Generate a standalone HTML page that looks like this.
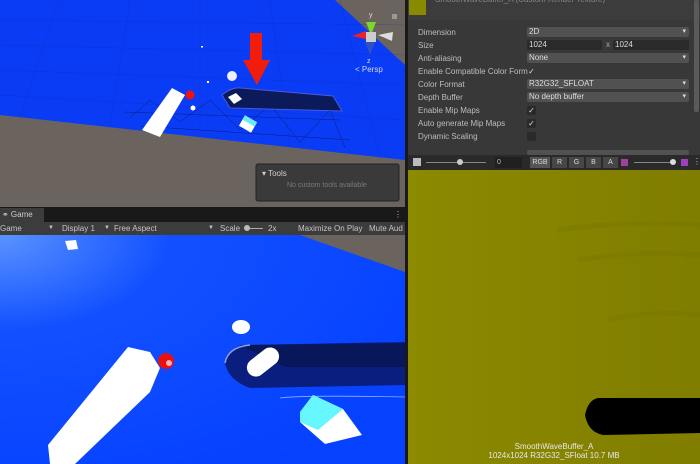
<!DOCTYPE html>
<html><head><style>
*{margin:0;padding:0;box-sizing:border-box}
body{width:700px;height:464px;overflow:hidden;background:#191919;font-family:"Liberation Sans",sans-serif;font-size:8px;color:#c8c8c8;position:relative}
.abs{position:absolute}
.row{position:absolute;left:418px;height:11px;line-height:11px;font-size:8px;color:#bdbdbd}
.fld{position:absolute;left:527px;width:162px;height:10px;background:#515151;border-radius:2px;font-size:8px;line-height:10px;padding-left:2px;color:#ddd}
.fld.dd::after{content:"▾";position:absolute;right:3px;top:0;font-size:7px}
.chk{position:absolute;left:527px;width:9px;height:9px;background:#2a2a2a;border-radius:1px;color:#ddd;font-size:8px;line-height:9px;text-align:center}
.tb{position:absolute;top:157px;height:11px;background:#474747;color:#ddd;font-size:7px;line-height:11px;text-align:center}
</style></head><body>
<!-- Scene view -->
<svg class="abs" style="left:0;top:0" width="405" height="208">
<rect width="405" height="208" fill="#6b645e"/>
<polygon points="0,0 335,0 405,65 405,160 0,115" fill="#0b3cf5"/>
<g stroke="#0a2aa8" stroke-width="0.5" opacity="0.4">
<line x1="0" y1="20" x2="405" y2="25"/><line x1="0" y1="45" x2="405" y2="55"/><line x1="0" y1="70" x2="405" y2="85"/><line x1="0" y1="95" x2="405" y2="120"/>
<line x1="60" y1="0" x2="20" y2="118"/><line x1="130" y1="0" x2="110" y2="125"/><line x1="200" y1="0" x2="200" y2="135"/><line x1="270" y1="0" x2="290" y2="145"/><line x1="340" y1="0" x2="380" y2="158"/>
</g>
<g stroke="#05165e" stroke-width="0.5" fill="none" opacity="0.8"><path d="M130 118 L150 100 L180 122 L210 100 L240 130 L270 105 L300 142 L330 110 L345 148 M125 112 L340 120 M140 126 L350 140"/></g>
<path d="M222 95 Q232 87 240 88 L333 96 L342 111 L230 108 Z" fill="#0a1a5a" stroke="#4a5ad8" stroke-width="1"/>
<path d="M228 97 L236 93 L242 99 L234 104 Z" fill="#fff"/>
<rect x="241" y="118" width="14" height="12" fill="#fff" transform="rotate(30 248 124)"/>
<rect x="241" y="118" width="14" height="5" fill="#6de8ff" transform="rotate(30 248 124)"/>
<polygon points="172,88 185,95 160,137 142,130" fill="#fff"/>
<circle cx="190" cy="95" r="4.5" fill="#e11"/>
<circle cx="232" cy="76" r="5" fill="#eef"/>
<circle cx="193" cy="108" r="2.5" fill="#fff"/>
<rect x="201" y="46" width="2" height="1.5" fill="#fff"/><rect x="207" y="81" width="2" height="2" fill="#fff"/>
<polygon points="250,33 262,33 262,60 270,60 257,85 243,60 250,60" fill="#f21c0c"/>
<polygon points="366,22 376,22 371,35" fill="#7bd92b"/>
<polygon points="352,36 366,31 366,39" fill="#e22"/>
<polygon points="378,35 393,32 392,41" fill="#ddd"/>
<polygon points="365,42 375,42 370,55" fill="#3050c0"/>
<rect x="366" y="32" width="10" height="10" fill="#ccc"/>
<text x="369" y="17" font-size="7" fill="#ddd">y</text><text x="367" y="63" font-size="7" fill="#ddd">z</text>
<text x="355" y="72" font-size="8" fill="#cfd8ff">&lt; Persp</text>
<rect x="392" y="14" width="5" height="5" fill="#999"/>
<rect x="256" y="164" width="143" height="37" rx="2" fill="#3a3a3a" stroke="#222"/>
<text x="262" y="176" font-size="8" fill="#cfcfcf">▾ Tools</text>
<text x="287" y="187" font-size="7" fill="#7a7a7a">No custom tools available</text>
</svg>
<!-- Game tabs -->
<div class="abs" style="left:0;top:207px;width:405px;height:15px;background:#191919"></div>
<div class="abs" style="left:0;top:208px;width:44px;height:14px;background:#3c3c3c;font-size:8px;line-height:14px;padding-left:2px;color:#ccc">⚭ Game</div>
<div class="abs" style="left:394px;top:210px;color:#ccc;font-size:8px">⋮</div>
<div class="abs" style="left:0;top:222px;width:405px;height:13px;background:#3c3c3c;font-size:8px;line-height:13px;color:#c4c4c4;white-space:nowrap">
<span class="abs" style="left:0">Game</span><span class="abs" style="left:48px;font-size:6px">▼</span>
<span class="abs" style="left:62px">Display 1</span><span class="abs" style="left:104px;font-size:6px">▼</span>
<span class="abs" style="left:114px">Free Aspect</span><span class="abs" style="left:208px;font-size:6px">▼</span>
<span class="abs" style="left:220px">Scale</span><span class="abs" style="left:244px;top:6px;width:19px;height:1px;background:#aaa"></span><span class="abs" style="left:244px;top:3px;width:6px;height:6px;border-radius:3px;background:#bbb"></span>
<span class="abs" style="left:268px">2x</span>
<span class="abs" style="left:298px">Maximize On Play</span><span class="abs" style="left:369px">Mute Aud</span>
</div>
<!-- Game view -->
<svg class="abs" style="left:0;top:235px" width="405" height="229">
<defs><radialGradient id="g" cx="0" cy="0" r="1.2"><stop offset="0" stop-color="#5a93ff"/><stop offset="0.35" stop-color="#1250ff"/><stop offset="1" stop-color="#0541ff"/></radialGradient></defs>
<rect width="405" height="229" fill="url(#g)"/>
<polygon points="300,0 405,0 405,37" fill="#6b645e"/>
<path d="M245 110 Q228 112 225 128 Q228 145 250 153 L405 150 L405 107 Z" fill="#0a1e80"/>
<path d="M240 110 L405 108 L405 132 L285 132 Z" fill="#08165a"/>
<path d="M225 128 Q228 112 250 110" stroke="#8aa0e0" fill="none" stroke-width="1.5"/>
<path d="M280 163 Q300 160 405 162" stroke="#8ab0ff" fill="none" stroke-width="0.8"/>
<rect x="245" y="118" width="36" height="18" rx="9" fill="#fff" transform="rotate(-38 263 127)"/>
<polygon points="128,112 150,117 160,133 150,157 75,229 50,229 48,210" fill="#fff"/>
<circle cx="166" cy="126" r="8" fill="#e81010"/><circle cx="169" cy="128" r="3" fill="#ffb0b0"/>
<ellipse cx="241" cy="92" rx="9" ry="7" fill="#fff"/>
<polygon points="65,6 76,5 78,14 68,15" fill="#fff"/>
<polygon points="300,177 313,160 343,174 362,200 325,209 300,187" fill="#fff"/>
<polygon points="300,177 313,160 343,174 318,195 300,187" fill="#66f6ff"/>
</svg>
<div class="abs" style="left:405px;top:0;width:3px;height:464px;background:#191919"></div>
<!-- Inspector -->
<div class="abs" style="left:408px;top:0;width:292px;height:155px;background:#383838"></div>
<div class="abs" style="left:408px;top:0;width:292px;height:20px;background:#3c3c3c"></div>
<div class="abs" style="left:409px;top:0;width:17px;height:15px;background:#8a8a00"></div>
<div class="abs" style="left:435px;top:-5px;font-size:8px;color:#888;white-space:nowrap">SmoothWaveBuffer_A (Custom Render Texture)</div>
<div class="row" style="top:27px">Dimension</div><div class="fld dd" style="top:27px">2D</div>
<div class="row" style="top:40px">Size</div><div class="fld" style="top:40px;width:75px;background:#2a2a2a">1024</div><div class="abs" style="left:606px;top:40px;color:#aaa;font-size:8px;line-height:10px">x</div><div class="fld" style="top:40px;left:613px;width:76px;background:#2a2a2a">1024</div>
<div class="row" style="top:53px">Anti-aliasing</div><div class="fld dd" style="top:53px">None</div>
<div class="row" style="top:66px">Enable Compatible Color Form</div><div class="chk" style="top:67px;background:transparent">✓</div>
<div class="row" style="top:79px">Color Format</div><div class="fld dd" style="top:79px">R32G32_SFLOAT</div>
<div class="row" style="top:92px">Depth Buffer</div><div class="fld dd" style="top:92px">No depth buffer</div>
<div class="row" style="top:105px">Enable Mip Maps</div><div class="chk" style="top:106px">✓</div>
<div class="row" style="top:118px">Auto generate Mip Maps</div><div class="chk" style="top:119px">✓</div>
<div class="row" style="top:131px">Dynamic Scaling</div><div class="chk" style="top:132px"></div>
<div class="fld" style="top:150px;height:5px"></div>
<div class="abs" style="left:694px;top:0;width:5px;height:112px;background:#5a5a5a;border-radius:2px"></div>
<!-- preview toolbar -->
<div class="abs" style="left:408px;top:155px;width:292px;height:15px;background:#2a2a2a"></div>
<div class="abs" style="left:413px;top:158px;width:8px;height:8px;background:#bbb"></div>
<div class="abs" style="left:426px;top:162px;width:60px;height:1px;background:#888"></div>
<div class="abs" style="left:457px;top:159px;width:6px;height:6px;border-radius:3px;background:#ccc"></div>
<div class="abs" style="left:495px;top:157px;width:27px;height:11px;background:#202020;color:#bbb;font-size:7px;line-height:11px;padding-left:2px">0</div>
<div class="tb" style="left:530px;width:20px;background:#555">RGB</div>
<div class="tb" style="left:552px;width:15px">R</div><div class="tb" style="left:569px;width:15px">G</div><div class="tb" style="left:586px;width:15px">B</div><div class="tb" style="left:603px;width:15px">A</div>
<div class="abs" style="left:621px;top:159px;width:7px;height:7px;background:#a040a0"></div>
<div class="abs" style="left:634px;top:162px;width:40px;height:1px;background:#888"></div>
<div class="abs" style="left:670px;top:159px;width:6px;height:6px;border-radius:3px;background:#ddd"></div>
<div class="abs" style="left:681px;top:159px;width:7px;height:7px;background:#a040c0"></div>
<div class="abs" style="left:693px;top:157px;color:#ccc;font-size:8px">⋮</div>
<!-- Preview -->
<svg class="abs" style="left:408px;top:170px" width="292" height="294">
<defs><linearGradient id="y" x1="0" y1="0" x2="1" y2="0"><stop offset="0" stop-color="#8c8a00"/><stop offset="1" stop-color="#807d00"/></linearGradient></defs>
<rect width="292" height="294" fill="url(#y)"/>
<g stroke="#767300" stroke-width="5" opacity="0.3" fill="none"><path d="M150 60 Q220 50 292 55"/><path d="M170 90 Q230 80 292 85"/><path d="M200 150 Q240 140 292 145"/></g>
<path d="M190 228 Q180 230 177 245 Q180 262 195 265 L292 263 L292 228 Z" fill="#000"/>
<text x="146" y="279" font-size="8" fill="#e8e8e8" text-anchor="middle">SmoothWaveBuffer_A</text>
<text x="146" y="288" font-size="8" fill="#e8e8e8" text-anchor="middle">1024x1024  R32G32_SFloat  10.7 MB</text>
</svg>
</body></html>
